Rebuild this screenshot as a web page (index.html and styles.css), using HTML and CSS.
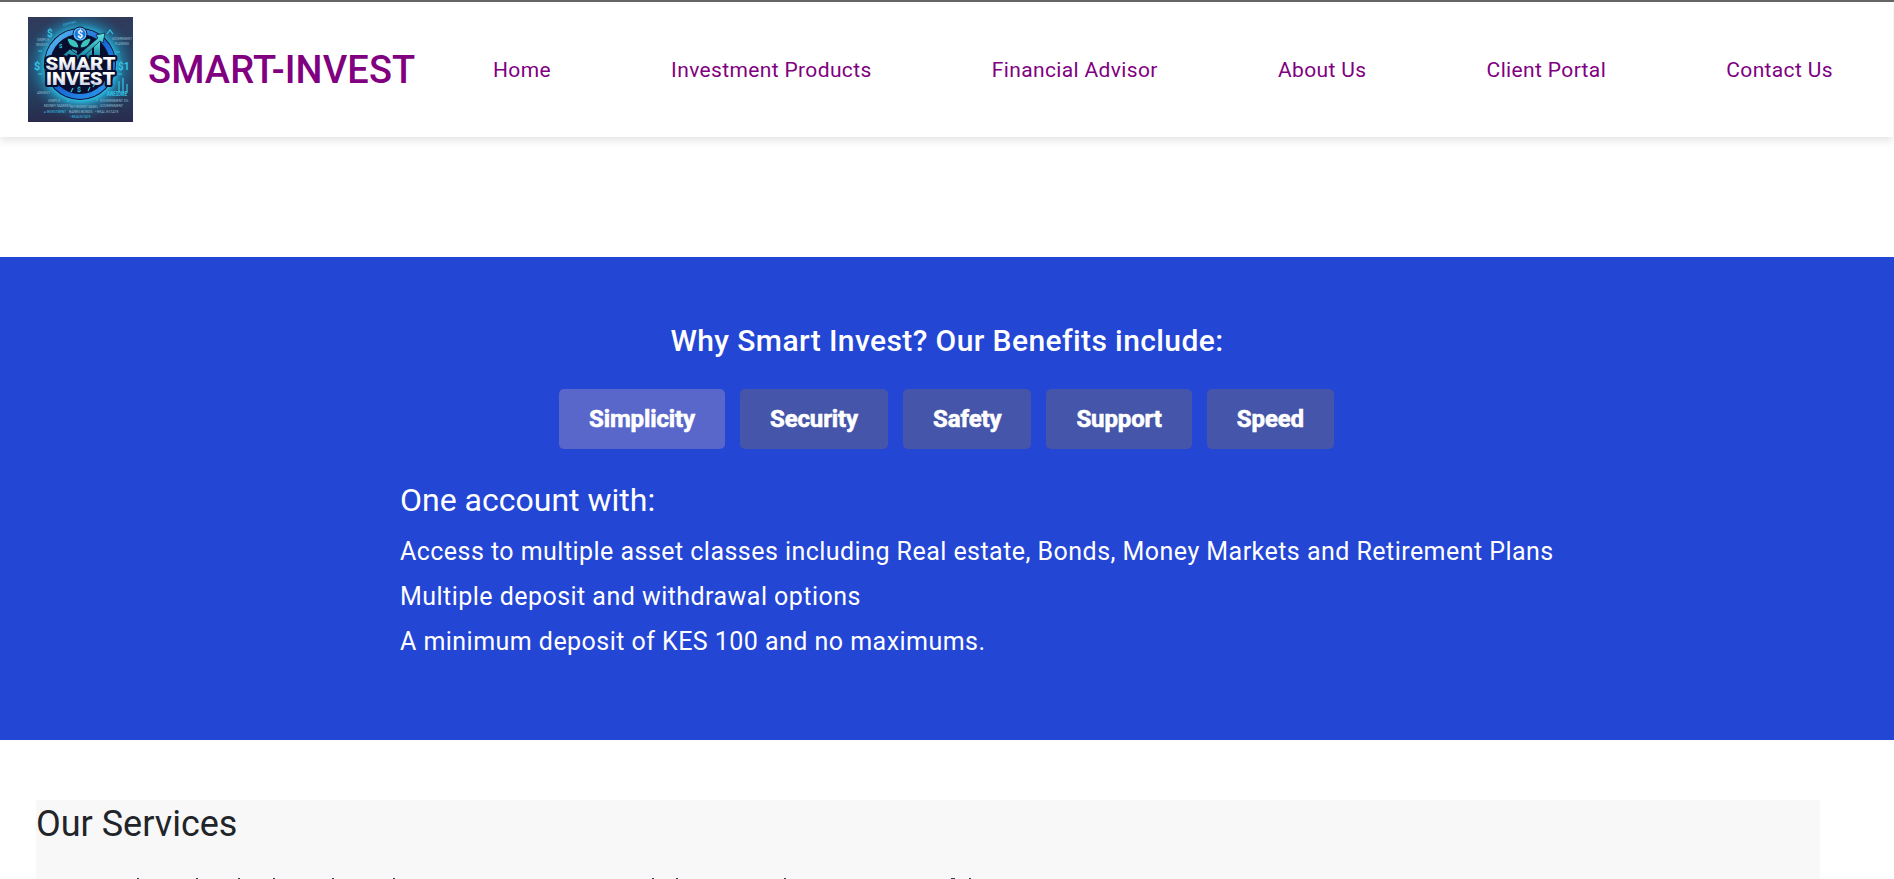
FILE: index.html
```html
<!DOCTYPE html>
<html lang="en">
<head>
<meta charset="utf-8">
<title>Smart-Invest</title>
<link rel="stylesheet" href="styles.css">
</head>
<body>
<header class="header">
  <a class="brand">
    <svg class="logo" viewBox="0 0 105 105">
      <defs>
        <linearGradient id="bg" x1="0" y1="0" x2="0" y2="1"><stop offset="0" stop-color="#30395a"/><stop offset=".55" stop-color="#234a6b"/><stop offset="1" stop-color="#292b4c"/></linearGradient>
        <radialGradient id="glow" cx=".5" cy=".46" r=".56"><stop offset=".6" stop-color="#2bb4da"/><stop offset=".72" stop-color="#21799f" stop-opacity=".75"/><stop offset="1" stop-color="#27304f" stop-opacity="0"/></radialGradient>
        <linearGradient id="ring" x1="0" y1="0" x2="1" y2="1"><stop offset="0" stop-color="#5fc4f4"/><stop offset=".5" stop-color="#1765d4"/><stop offset="1" stop-color="#2e9cf0"/></linearGradient>
        <linearGradient id="teal" x1="0" y1="0" x2="0" y2="1"><stop offset="0" stop-color="#5ce6e0"/><stop offset="1" stop-color="#0e7198"/></linearGradient>
        <linearGradient id="steel" x1="0" y1="0" x2="0" y2="1"><stop offset=".4" stop-color="#fff"/><stop offset="1" stop-color="#b9c3dc"/></linearGradient>
      </defs>
      <rect width="105" height="105" fill="url(#bg)"/>
      <rect width="105" height="105" fill="url(#glow)"/>
      <circle cx="52" cy="47" r="36" fill="#0b1030"/>
      <circle cx="52" cy="47" r="32.5" fill="none" stroke="url(#ring)" stroke-width="5"/>
      <circle cx="52" cy="47" r="28.5" fill="#080e2e"/>
      <path d="M44 42h5v-8l-5-2zM51 42h5V35l-5 3zM58 42h6V29l-6 4zM66 42h6V23l-6 5z" fill="url(#teal)"/>
      <path d="M34 39l8-7 8 6 20-17-2-3 9-2-2 10-3-2-21 20-10-7-7 6z" fill="url(#teal)" stroke="#07102f" stroke-width=".7"/>
      <path d="M51 31c-1-8-6-9-12-10 1 7 5 10 12 10zm1 0c1-8 6-9 11-10-1 7-5 10-11 10z" fill="#3cc5bd" stroke="#07102f"/>
      <circle cx="52" cy="17" r="7.4" fill="#07102f"/>
      <circle cx="52" cy="17" r="6" fill="#1a78de" stroke="#62c6ff" stroke-width="1.2"/>
      <text class="coin" x="52" y="21" text-anchor="middle">$</text>
      <text class="mark" x="52.5" y="52.5" text-anchor="middle" textLength="70" lengthAdjust="spacingAndGlyphs">SMART</text>
      <text class="mark" x="52.5" y="67.5" text-anchor="middle" textLength="69" lengthAdjust="spacingAndGlyphs">INVEST</text>
      <g class="cyan">
        <text class="s10" x="19" y="20">$</text><text class="s11" x="6" y="53">$</text><text class="s10" x="90" y="53">$1</text><text class="s7" x="49" y="75">$</text><text class="s6" x="31" y="31">$</text>
        <path d="M79 17l3-4 3 4M91 76V64m4 12V61m4 15v-9M43 75l2-4m15 3l2-4m3 0l2-3M10 34h4m-4 23h4m74-22h4m-2 22h4" fill="none" stroke="#35c4e6" stroke-width="1.2"/>
        <text class="s8" x="79" y="79" textLength="20" lengthAdjust="spacingAndGlyphs">AWESOME</text>
        <text class="s3" x="35" y="9" transform="rotate(-14 35 9)">ADRISING</text>
        <text class="s3" x="42" y="101">• REALESTATE</text>
        <text class="s3" x="16" y="96">● INVESTMENT</text>
        <circle cx="40" cy="84" r=".8"/><circle cx="69" cy="83" r=".8"/>
      </g>
      <g class="notes">
        <text x="9" y="24">SIMPLE</text><text x="8" y="29">INVEST</text><text x="84" y="23" textLength="20" lengthAdjust="spacingAndGlyphs">GOVERNMENT</text><text x="87" y="28" textLength="14" lengthAdjust="spacingAndGlyphs">PLANNING</text><text x="9" y="77">ANVEST</text>
        <text x="20" y="85">SIMPLE</text><text x="72" y="85">GOVERNMENT DS</text><text x="16" y="90">MONEY MARKET</text><text x="42" y="91" textLength="28" lengthAdjust="spacingAndGlyphs">RETIREMENT BANKS</text><text x="72" y="90">GOVERNMENT</text><text x="41" y="96">BANKS BONDS</text><text x="67" y="96">• REAL ESTATE</text>
      </g>
    </svg>
    <span class="brand-name">SMART-INVEST</span>
  </a>
  <nav class="nav"><a>Home</a><a>Investment Products</a><a>Financial Advisor</a><a>About Us</a><a>Client Portal</a><a>Contact Us</a></nav>
</header>
<section class="benefits">
  <h2 class="benefits-title">Why Smart Invest? Our Benefits include:</h2>
  <div class="tabs"><button class="tab active">Simplicity</button><button class="tab">Security</button><button class="tab">Safety</button><button class="tab">Support</button><button class="tab">Speed</button></div>
  <div class="panel">
    <h3 class="panel-title">One account with:</h3>
    <ul class="list"><li>Access to multiple asset classes including Real estate, Bonds, Money Markets and Retirement Plans</li><li>Multiple deposit and withdrawal options</li><li>A minimum deposit of KES 100 and no maximums.</li></ul>
  </div>
</section>
<section class="services">
  <h2 class="services-title">Our Services</h2>
  <svg class="edge" viewBox="0 0 1784 1" shape-rendering="crispEdges"><path d="M101 0h2v1h-2zM160 0h2v1h-2zM202 0h2v1h-2zM237 0h2v1h-2zM296 0h2v1h-2zM357 0h2v1h-2zM616 0h2v1h-2zM640 0h2v1h-2zM748 0h2v1h-2zM915 0h4v1h-4zM933 0h2v1h-2z" fill="#33425c"/></svg>
</section>
</body>
</html>
```
FILE: styles.css
```css
* { box-sizing: border-box; }
body { margin: 0; height: 879px; overflow: hidden; background: #fff; color: #212529; font-family: Roboto, sans-serif; border-top: 2px solid #666465; }
.header { display: flex; align-items: center; height: 135px; width: 1893px; padding: 0 60px 0 28px; background: #fff; box-shadow: 0 4px 8px rgba(0, 0, 0, .1); color: purple; }
.brand { display: flex; align-items: center; gap: 15px; width: 465px; flex: none; }
.logo { display: block; width: 105px; height: 105px; }
.brand-name { font-size: 38px; font-weight: 500; letter-spacing: .13px; white-space: nowrap; }
.nav { flex: 1; display: flex; justify-content: space-between; font-size: 21px; font-weight: 400; letter-spacing: .36px; white-space: nowrap; }
.coin { font: 700 10px Roboto, sans-serif; fill: #fff; }
.mark { font: 900 18px Roboto, sans-serif; fill: url(#steel); stroke: #0a0e2c; stroke-width: 4px; paint-order: stroke; stroke-linejoin: round; }
.cyan { fill: #35c4e6; font-family: Roboto, sans-serif; font-weight: 700; }
.s3 { font-size: 3.2px; font-weight: 400; }
.s6 { font-size: 6px; }
.s7 { font-size: 7px; }
.s8 { font-size: 8px; }
.s10 { font-size: 10px; }
.s11 { font-size: 11px; }
.notes { fill: #8fb6cc; font: 3.5px Roboto, sans-serif; }
.benefits { margin-top: 120px; height: 483px; padding-top: 64px; background: #2346d5; color: #fff; }
.benefits-title { margin: 0; text-align: center; font-size: 30px; line-height: 40px; font-weight: 500; letter-spacing: .4px; }
.tabs { display: flex; justify-content: center; gap: 15px; margin: 28px 1px 0 0; }
.tab { height: 60px; padding: 0 30px; border: 0; border-radius: 5px; background: #4555a9; color: #fff; font: 700 24px Roboto, sans-serif; letter-spacing: -.12px; -webkit-text-stroke: .6px #fff; }
.active { background: #5966ca; }
.panel { margin: 30px 0 0 400px; }
.panel-title { margin: 0; font-size: 32px; line-height: 42px; font-weight: 400; letter-spacing: 0; }
.list { margin: 8px 0 0; padding: 0; list-style: none; font-size: 25px; line-height: 45px; letter-spacing: .46px; }
.services { margin: 60px 74px 0 36px; height: 79px; background: #f8f8f8; }
.services-title { margin: 0; padding-top: 3px; height: 78px; font-size: 36px; line-height: 43px; font-weight: 400; letter-spacing: 0; }
.edge { display: block; width: 1784px; height: 1px; }
```
